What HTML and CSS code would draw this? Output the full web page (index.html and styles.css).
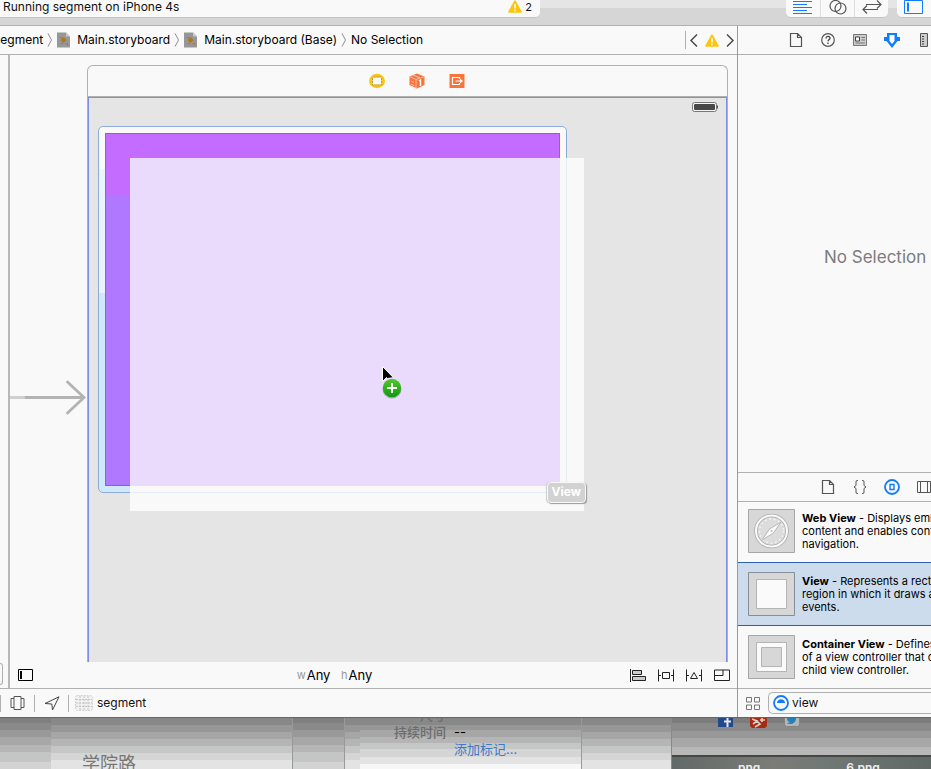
FILE: index.html
```html
<!DOCTYPE html>
<html lang="en">
<head>
<meta charset="utf-8">
<title>Main.storyboard</title>
<link rel="stylesheet" href="styles.css">
</head>
<body>
<svg class="defs" aria-hidden="true">
  <defs>
    <symbol id="chev" viewBox="0 0 6 14"><path d="M1 0.500L4.500 7L1 13.500" fill="none" stroke="#8f8f8f"/></symbol>
    <symbol id="board" viewBox="0 0 13 16"><path d="M0 0.500h9l4 4v11H0z" fill="#979797"/><path d="M9 .5v4h4z" fill="#c9c9c9"/><path d="M2.500 5.500h3M8.500 11.500h2v2M4 11.500h2" stroke="#a87d28" fill="none"/><path d="M6.500 5l3 3-3 3-3-3z" fill="#b07a10"/></symbol>
    <symbol id="warn" viewBox="0 0 14 13"><path d="M7 1.200L13 12H1z" fill="#fdc60c" stroke="#fdc60c" stroke-width="1.600" stroke-linejoin="round"/><path d="M7 4v4.500M7 9.800v1.500" stroke="#fff" stroke-width="1.500"/></symbol>
    <symbol id="file" viewBox="0 0 14 14"><path d="M1.500 .5h7l4 4v9h-11zM8.500 .5v4h4" fill="none" stroke="currentColor" stroke-width="1.200"/></symbol>
  </defs>
</svg>

<header class="toolbar">
  <div class="activity">
    <span>Running segment on iPhone 4s</span>
    <span class="issues"><svg width="14" height="13"><use href="#warn"/></svg>2</span>
  </div>
  <div class="segments">
    <button aria-label="Standard editor"><svg width="20" height="14" viewBox="0 0 20 14"><path d="M0 1.500h19M0 4.500h14M0 7.500h19M0 10.500h14M0 13.500h19" stroke="#127cff" fill="none"/></svg></button>
    <button aria-label="Assistant editor"><svg width="18" height="15" viewBox="0 0 18 15"><g fill="none" stroke="#555" stroke-width="1.200"><circle cx="6.500" cy="6" r="5.500"/><circle cx="11.500" cy="8.500" r="5.500"/></g></svg></button>
    <button aria-label="Version editor"><svg width="20" height="14" viewBox="0 0 20 14"><path d="M4 4.500h15M15 .5l4 4-4 4M16 9.500H1M5 5.500l-4 4 4 4" fill="none" stroke="#555" stroke-width="1.200"/></svg></button>
  </div>
  <div class="segments cut">
    <button aria-label="Toggle navigator"><svg width="20" height="14" viewBox="0 0 20 14"><path d="M.5 .5h18v13H.5z" fill="none" stroke="#127cff"/><path d="M3 2.500h2v9H3z" fill="#127cff"/></svg></button>
  </div>
</header>

<div class="workspace">
  <main class="editor">
    <nav class="jumpbar">
      <a href="#s">segment</a><svg width="6" height="14"><use href="#chev"/></svg>
      <a href="#m"><svg width="13" height="16"><use href="#board"/></svg>Main.storyboard</a><svg width="6" height="14"><use href="#chev"/></svg>
      <a href="#b"><svg width="13" height="16"><use href="#board"/></svg>Main.storyboard (Base)</a><svg width="6" height="14"><use href="#chev"/></svg>
      <a href="#n">No Selection</a>
      <div class="jump-issues">
        <button aria-label="Previous issue"><svg width="8" height="13" viewBox="0 0 8 13"><path d="M7 .5L1 6.500l6 6" fill="none" stroke="#444" stroke-width="1.400"/></svg></button>
        <svg width="14" height="13"><use href="#warn"/></svg>
        <button aria-label="Next issue"><svg width="8" height="13" viewBox="0 0 8 13"><path d="M1 .5l6 6-6 6" fill="none" stroke="#444" stroke-width="1.400"/></svg></button>
      </div>
    </nav>

    <div class="stage">
      <aside class="outline"><span class="outline-field"></span></aside>
      <section class="canvas-col">
        <div class="canvas">
          <svg class="entry" width="77" height="36" viewBox="0 0 77 36"><path d="M0 17.500h16" stroke="#d0d0d0" stroke-width="3"/><path d="M16 17.500h58M57.500 2L74 17.500 57.500 33" fill="none" stroke="#b3b3b3" stroke-width="2.800" stroke-linecap="round"/></svg>
          <div class="scene">
            <div class="dock">
              <svg width="16" height="16" viewBox="0 0 16 16"><ellipse cx="8" cy="8" rx="8" ry="7.200" fill="#fbc60e"/><path d="M3.500 4h9v8h-9z" fill="#fafafa" stroke="#c39a22"/><path d="M3.500 4h9v8h-9z" fill="none" stroke="#e6d391" stroke-dasharray="1 2"/></svg>
              <svg width="16" height="16" viewBox="0 0 16 16"><path d="M8 .5l7.500 3v8.500L8 15.500.5 12V3.500z" fill="#f9733c"/><path d="M.5 3.500L7 6.500l8.500-3M7 6.500v9M2 8l3 1.500M2 11l3 1.500M4 2l7 3" fill="none" stroke="#fdc4ab"/><path d="M10 8l1.500-1v6" fill="none" stroke="#fff" stroke-width="1.400"/></svg>
              <svg width="16" height="16" viewBox="0 0 16 16"><path d="M.5 1h15v14H.5z" fill="#f9733c"/><path d="M10.500 6V4.500h-7v7h7V10M6.500 8H12" fill="none" stroke="#fff" stroke-width="1.200"/><path d="M11 5.500L14 8l-3 2.500z" fill="#fff"/></svg>
            </div>
            <div class="device">
              <div class="status"><svg width="27" height="11" viewBox="0 0 27 11"><rect x=".5" y=".5" width="24" height="9" rx="2" fill="#f4f4f4" stroke="#777"/><rect x="2" y="2" width="21" height="6" rx="1" fill="#474947"/><path d="M25.500 3.500v3" stroke="#555"/></svg></div>
              <div class="drop"><div class="view"></div></div>
              <div class="ghost">
                <div class="ghost-view"></div>
                <span class="tag">View</span>
              </div>
              <svg class="cursor" width="22" height="36" viewBox="0 0 22 36">
                <defs><linearGradient id="g" x2="0" y2="1"><stop offset="0" stop-color="#55c92e"/><stop offset="1" stop-color="#0c9a0c"/></linearGradient></defs>
                <path d="M1.500 1.500v15l4-4 1 1 6-.8z" fill="#000" stroke="#fff"/>
                <circle cx="11" cy="24" r="9.500" fill="#8d7fa0" opacity=".6"/>
                <circle cx="11" cy="23" r="9.200" fill="url(#g)"/>
                <path d="M11 18v10M6 23h10" stroke="#fff" stroke-width="2"/>
              </svg>
            </div>
          </div>
        </div>
        <footer class="sizebar">
          <button aria-label="Toggle outline"><svg width="15" height="12" viewBox="0 0 15 12"><path d="M.5 .5h14v11H.5z" fill="none" stroke="#000"/><path d="M2 2h2v8H2z"/></svg></button>
          <button class="size"><small>w</small>Any <small>h</small>Any</button>
          <div class="constraints">
            <button aria-label="Align"><svg width="16" height="13" viewBox="0 0 16 13"><path d="M.5 0v13M2.500 1.500h9v4h-9zM2.500 7.500h13v4h-13z" fill="#ccc" stroke="#222"/></svg></button>
            <button aria-label="Pin"><svg width="16" height="13" viewBox="0 0 16 13"><path d="M.5 .5v12M15.500 .5v12M0 6.500h3M13 6.500h3M4.500 3.500h7v6h-7z" fill="none" stroke="#222"/></svg></button>
            <button aria-label="Resolve"><svg width="16" height="13" viewBox="0 0 16 13"><path d="M.5 .5v12M15.500 .5v12M0 6.500h3M13 6.500h3M8 3.500l3.500 6h-7z" fill="none" stroke="#222"/></svg></button>
            <button aria-label="Resizing"><svg width="16" height="13" viewBox="0 0 16 13"><path d="M.5 1h15v10.500H.5zM.5 6.500h8.500V1" fill="none" stroke="#222"/></svg></button>
          </div>
        </footer>
      </section>
    </div>

    <footer class="debugbar">
      <button aria-label="View hierarchy"><svg width="15" height="14" viewBox="0 0 15 14"><path d="M4 .5h7v13H4zM4 2.500H1v9h3M11 2.500h3v9h-3" fill="none" stroke="#555"/></svg></button>
      <button aria-label="Simulate location"><svg width="16" height="15" viewBox="0 0 16 15"><path d="M15 .8L8.500 14 7.800 8 1 7.500z" fill="none" stroke="#444"/></svg></button>
      <button class="target"><svg width="18" height="16" viewBox="0 0 18 16"><rect x=".5" y=".5" width="17" height="15" rx="2" fill="#f1f1f1" stroke="#d2d2d2" stroke-dasharray="2 1"/><path d="M1 4.500h16M1 8h16M1 11.500h16M5 1v14M9 1v14M13 1v14" stroke="#c4c4c4" stroke-dasharray="2 1"/></svg>segment</button>
    </footer>
  </main>

  <aside class="utilities">
    <div class="tabs">
      <button aria-label="File"><svg width="14" height="14"><use href="#file"/></svg></button>
      <button aria-label="Quick help"><svg width="14" height="14" viewBox="0 0 14 14"><circle cx="7" cy="7" r="6.300" fill="none" stroke="#555" stroke-width="1.200"/><path d="M5 5.500c0-3 4-2.500 4-.3C9 6.500 7 6.500 7 8.300M7 9.500V11" fill="none" stroke="#444" stroke-width="1.300"/></svg></button>
      <button aria-label="Identity"><svg width="14" height="12" viewBox="0 0 14 12"><path d="M.5 .5h13v11H.5z" fill="#ccc" stroke="#777"/><path d="M2.500 3h4v4h-4z" fill="#fff" stroke="#444"/><path d="M8.500 3.500h3.500M8.500 6h3.500M2.500 9h9.500" stroke="#777"/></svg></button>
      <button aria-label="Attributes"><svg width="16" height="15" viewBox="0 0 16 15"><path d="M3 0h10v4h3v4h-2.500L8 15 2.500 8H0V4h3z" fill="#127cff"/><path d="M5.500 2h5v6L8 11 5.500 8z" fill="#fff"/></svg></button>
      <button aria-label="Size"><svg width="14" height="14" viewBox="0 0 14 14"><path d="M3.500 .5h7v13h-7z" fill="#ccc" stroke="#555"/><path d="M5 3.500h2M5 6h2M5 8.500h2M5 11h2" stroke="#444"/></svg></button>
    </div>
    <div class="inspector">No Selection</div>
    <div class="tabs library-tabs">
      <button aria-label="File templates"><svg width="14" height="14"><use href="#file"/></svg></button>
      <button aria-label="Snippets"><svg width="14" height="14" viewBox="0 0 14 14"><path d="M5 .5H4Q3 .5 3 2v3.500L1 7l2 1.500V12q0 1.500 1 1.500h1M9 .5h1q1 0 1 1.500v3.500L13 7l-2 1.500V12q0 1.500-1 1.500H9" fill="none" stroke="#555"/></svg></button>
      <button aria-label="Objects"><svg width="16" height="16" viewBox="0 0 16 16"><circle cx="8" cy="8" r="7" fill="none" stroke="#127cff" stroke-width="1.800"/><path d="M6 5.500h4v5H6z" fill="none" stroke="#127cff" stroke-width="1.400"/></svg></button>
      <button aria-label="Media"><svg width="14" height="12" viewBox="0 0 14 12"><path d="M.5 .5h13v11H.5zM3.500 .5v11M10.500 .5v11" fill="none" stroke="#555"/></svg></button>
    </div>
    <ul class="library">
      <li>
        <svg width="47" height="44" viewBox="0 0 47 44"><path d="M.5 .5h46v43H.5z" fill="#d7d7d7" stroke="#a6a6a6"/><circle cx="23.500" cy="22" r="15.500" fill="#dcdcdc" stroke="#aaa" stroke-width="3.500"/><circle cx="23.500" cy="22" r="15.500" fill="none" stroke="#fafafa" stroke-width="2"/><circle cx="23.500" cy="22" r="12" fill="none" stroke="#f7f7f7" stroke-width="1.500" stroke-dasharray="1.500 3"/><path d="M33 13L25.500 24 14 31 21.500 20z" fill="#fafafa" stroke="#b8b8b8"/><circle cx="23.500" cy="22" r="1" fill="#bbb"/></svg>
        <p><b>Web View</b> - Displays embedded web<br>content and enables content<br>navigation.</p>
      </li>
      <li class="selected">
        <svg width="47" height="44" viewBox="0 0 47 44"><path d="M.5 .5h46v43H.5z" fill="#d7d7d7" stroke="#868e97"/><path d="M8.500 7.500h30v29h-30z" fill="#fafafa" stroke="#b4b4b4"/></svg>
        <p><b>View</b> - Represents a rectangular<br>region in which it draws and receives<br>events.</p>
      </li>
      <li class="last">
        <svg width="47" height="44" viewBox="0 0 47 44"><path d="M.5 .5h46v43H.5z" fill="#d7d7d7" stroke="#a6a6a6"/><path d="M8.500 7.500h30v29h-30z" fill="#fafafa" stroke="#b4b4b4"/><path d="M13.500 12.500h20v19h-20z" fill="#d7d7d7" stroke="#b4b4b4"/></svg>
        <p><b>Container View</b> - Defines a region<br>of a view controller that can include a<br>child view controller.</p>
      </li>
    </ul>
    <div class="filterbar">
      <button aria-label="Icon view"><svg width="14" height="13" viewBox="0 0 14 13"><path d="M.5 .5h5v4.500h-5zM8.500 .5h5v4.500h-5zM.5 8h5v4.500h-5zM8.500 8h5v4.500h-5z" fill="none" stroke="#777"/></svg></button>
      <label class="search"><svg width="16" height="16" viewBox="0 0 16 16"><circle cx="8" cy="8" r="7" fill="none" stroke="#127cff" stroke-width="1.800"/><path d="M4 8c0-5 8-5 8 0z" fill="#127cff"/></svg><input aria-label="Filter library" value="view"></label>
    </div>
  </aside>
</div>

<div class="desktop">
  <div class="pane shade"></div>
  <div class="pane map">学院路</div>
  <div class="pane shade side"></div>
  <div class="pane side"></div>
  <div class="pane info">
    <dl><dt>尺寸</dt><dd></dd><dt>持续时间</dt><dd>--</dd><dt></dt><dd><a href="#t">添加标记…</a></dd></dl>
  </div>
  <div class="pane side"></div>
  <div class="pane photos">
    <div class="social">
      <svg width="15" height="9" viewBox="0 0 15 9"><path d="M0 0h15v9H0z" fill="#23498a"/><path d="M9.500 9V0M6 3.500h7" stroke="#e4e8ef" stroke-width="2"/></svg>
      <svg width="17" height="10" viewBox="0 0 17 10"><path d="M0 0h17v8l-2 2H2L0 8z" fill="#a92a12"/><path d="M2 1l5 2-4 3M7 3l3 3-5 3M12 0v4M10 2h5" fill="none" stroke="#ded2cd" stroke-width="1.600"/></svg>
      <svg width="16" height="9" viewBox="0 0 16 9"><path d="M.5 0v7l2 1.500h11l2-1.500V0" fill="#b4b4b4" stroke="#858585"/><path d="M3 0h9c0 4-3 6-6 6-2 0-3-1-3-1 2 0 3-1 3-1-2 0-3-2-3-4z" fill="#267fba"/></svg>
    </div>
    <div class="files"><span>png</span><span>6.png</span></div>
  </div>
</div>
</body>
</html>
```
FILE: styles.css
```css
* { box-sizing: border-box; }
html, body { margin: 0; height: 100%; }
body {
  display: flex;
  flex-direction: column;
  overflow: hidden;
  background: #f9f9f9;
  color: #111;
  font: 12px/16px Inter, "Noto Sans CJK SC", sans-serif;
}
svg { display: block; flex: none; }
.defs { position: absolute; width: 0; height: 0; }
a { color: inherit; text-decoration: none; }
button {
  display: flex;
  align-items: center;
  justify-content: center;
  flex: none;
  padding: 0;
  border: 0;
  background: none;
  color: inherit;
  font: inherit;
}

.toolbar {
  display: flex;
  align-items: flex-start;
  flex: none;
  height: 26px;
  border-bottom: 1px solid #b0b0b0;
  background: linear-gradient(#e5e5e5 8px, #d6d6d6 8px);
}
.activity {
  display: flex;
  justify-content: space-between;
  width: 58%;
  height: 18px;
  padding: 0 8px 0 3px;
  line-height: 14px;
  background: #f9f9f9;
  border-bottom: 1px solid #c4c4c4;
  border-radius: 0 0 5px 0;
}
.issues { display: flex; gap: 3px; font-size: 11px; }
.segments {
  display: flex;
  margin-left: auto;
  height: 18px;
  background: #f9f9f9;
  border-bottom: 1px solid #c4c4c4;
  border-radius: 0 0 5px 5px;
}
.segments button { width: 34px; padding-bottom: 3px; }
.segments button + button { border-left: 1px solid #ddd; }
.segments.cut { margin-left: 9px; border-radius: 0 0 0 5px; }

.workspace { display: flex; flex: 1; min-height: 0; border-bottom: 1px solid #666; }
.editor { display: flex; flex-direction: column; flex: 1; min-width: 0; }

.jumpbar {
  display: flex;
  align-items: center;
  gap: 4px;
  flex: none;
  height: 29px;
  margin-left: -6px;
  border-bottom: 1px solid #b0b0b0;
  color: #000;
  white-space: nowrap;
}
.jumpbar a { display: flex; align-items: center; gap: 7px; }
.jump-issues {
  display: flex;
  align-items: center;
  gap: 7px;
  height: 18px;
  margin-left: auto;
  padding: 0 3px 0 4px;
  border-left: 1px solid #b0b0b0;
}

.stage { display: flex; flex: 1; min-height: 0; }
.outline {
  display: flex;
  align-items: flex-end;
  width: 10px;
  padding-bottom: 3px;
  border-right: 2px solid #b8b8b8;
}
.outline-field { width: 3px; height: 22px; border: 1px solid #b0b0b0; border-left: 0; border-radius: 0 4px 4px 0; }
.canvas-col { display: flex; flex-direction: column; flex: 1; min-width: 0; }
.canvas { display: flex; flex: 1; min-height: 0; padding: 10px 9px 0 0; overflow: hidden; }
.entry { margin-top: 315px; }
.scene {
  display: flex;
  flex-direction: column;
  flex: 1;
  border: 1px solid #b0b0b0;
  border-bottom: 0;
  border-radius: 6px 6px 0 0;
}
.dock {
  display: flex;
  align-items: center;
  justify-content: center;
  gap: 24px;
  height: 31px;
  padding-left: 19px;
  border-bottom: 1px solid #b0b0b0;
}
.device {
  position: relative;
  flex: 1;
  border: 1px solid #7b8fe6;
  border-bottom: 0;
  background: #e5e5e5;
}
.status { display: flex; justify-content: flex-end; height: 28px; padding: 4px 7px 0 0; }
.drop {
  width: 469px;
  height: 367px;
  margin-left: 9px;
  padding: 6px;
  border: 1px solid #8bacdb;
  border-radius: 5px;
  background: linear-gradient(#f9f9f9 42px, #e9f4fd 42px, #e9f4fd 166px, #cfe8fa 166px);
  background-size: 50% 100%;
  background-repeat: no-repeat;
  background-color: #f9f9f9;
}
.view {
  height: 353px;
  border: 1px solid #7766f0;
  background: linear-gradient(#c46cff 60px, #b077ff 62px);
  background-size: 24px 100%;
  background-repeat: no-repeat;
  background-color: #c46cff;
}
.ghost {
  position: absolute;
  left: 41px;
  top: 60px;
  width: 454px;
  height: 353px;
  background: #f9f9f9;
}
.ghost-view {
  width: 437px;
  height: 335px;
  border: solid #e3edf6;
  border-width: 0 1px 1px 0;
  background: linear-gradient(#eadbfc, #eadbfc) 0 0 / 430px 328px no-repeat #f9f9f9;
}
.tag {
  position: absolute;
  right: -2px;
  bottom: 8px;
  padding: 1px 4px 2px;
  border: 1px solid #f9f9f9;
  border-radius: 4px;
  background: #d2d2d2;
  box-shadow: 1px 1px 1px #999, -1px 0 1px #ccc;
  color: #fff;
  font-weight: 700;
}
.cursor { position: absolute; left: 292px; top: 267px; }

.sizebar {
  display: flex;
  align-items: center;
  justify-content: space-between;
  flex: none;
  height: 26px;
  padding: 0 7px 0 8px;
}
.size { gap: 1px; padding-left: 6px; color: #000; font-size: 13px; white-space: pre; }
.size small { font-size: 11px; color: #999; }
.size small + small { padding-left: 6px; }
.constraints { display: flex; gap: 12px; }

.debugbar {
  display: flex;
  align-items: center;
  flex: none;
  height: 29px;
  border-top: 1px solid #b0b0b0;
}
.debugbar button { height: 17px; width: 34px; border-left: 1px solid #b0b0b0; }
.debugbar .target { width: auto; gap: 4px; padding-left: 6px; }

.utilities {
  display: flex;
  flex-direction: column;
  width: 194px;
  border-left: 1px solid #999;
  overflow: hidden;
}
.tabs {
  display: flex;
  align-items: center;
  gap: 16px;
  flex: none;
  height: 29px;
  padding-left: 50px;
  border-bottom: 1px solid #b0b0b0;
  color: #555;
}
.tabs button { width: 16px; }
.library-tabs { height: 30px; padding-left: 82px; border-top: 1px solid #b0b0b0; }
.inspector {
  flex: 1;
  padding: 190px 0 0 86px;
  color: #7c7c7c;
  font-size: 17px;
  line-height: 24px;
  white-space: nowrap;
}
.library { margin: 0; padding: 0; list-style: none; color: #000; }
.library li { display: flex; gap: 7px; height: 60px; padding: 7px 10px; white-space: nowrap; }
.library .selected { height: 64px; padding-top: 9px; border: solid #2f5fb0; border-width: 1px 0; background: #cddcec; }
.library .last { height: 62px; padding-top: 9px; }
.library p { margin: 3px 0 0; font-size: 11px; line-height: 13px; }
.filterbar {
  display: flex;
  align-items: center;
  gap: 8px;
  flex: none;
  height: 29px;
  padding-left: 8px;
  border-top: 1px solid #b0b0b0;
}
.search {
  display: flex;
  align-items: center;
  gap: 3px;
  flex: 1;
  height: 22px;
  padding-left: 4px;
  border: 1px solid #b0b0b0;
  border-right: 0;
  border-radius: 5px 0 0 5px;
}
.search input { width: 100%; min-width: 0; padding: 0; border: 0; outline: 0; background: none; font: inherit; color: inherit; }

.desktop {
  display: grid;
  grid-template-columns: 51px 241px 52px 16px 221px 90px 1fr;
  grid-template-rows: 100%;
  flex: none;
  height: 51px;
}
.pane {
  overflow: hidden;
  background: linear-gradient(#888 7px, #979797 7px, #979797 14px, #a6a6a6 14px, #a6a6a6 21px, #b5b5b5 21px, #b5b5b5 28px, #c5c7c6 28px, #c5c7c6 35px, #d5d5d5 35px, #d5d5d5 42px, #e3e3e3 42px);
}
.shade { background: linear-gradient(#7f7f7f 5px, #8a8a8a 5px, #8a8a8a 12px, #999 12px, #999 19px, #a7a7a7 19px, #a7a7a7 27px, #b6b6b6 27px, #b6b6b6 34px, #c4c6c5 34px, #c4c6c5 44px, #d3d3d3 44px); }
.map { padding: 34px 0 0 31px; color: #777; font-size: 18px; line-height: 24px; }
.side { border-left: 1px solid #999; }
.info { background: linear-gradient(#888 7px, #979797 7px, #979797 12px, #a6a6a6 12px, #a6a6a6 19px, #b5b5b5 19px, #b5b5b5 25px, #c5c7c6 25px, #c5c7c6 31px, #d5d5d5 31px, #d5d5d5 39px, #e3e3e3 39px, #e3e3e3 46px, #f7f7f7 46px); }
.info dl {
  display: grid;
  grid-template-columns: 86px 1fr;
  grid-auto-rows: 17px;
  column-gap: 8px;
  margin: -11px 0 0;
  font-size: 13px;
  line-height: 16px;
}
.info dt { color: #6c6c6c; font-weight: 500; text-align: right; }
.info dd { margin: 0; color: #000; }
.info a { color: #3b7bc8; }
.photos { display: flex; flex-direction: column; background: linear-gradient(#7c7c7c 5px, #8a8a8a 5px, #8a8a8a 13px, #989898 13px, #989898 20px, #a7a7a7 20px, #a7a7a7 29px, #b8b8b8 29px); border-left: 1px solid #888; }
.social { display: flex; flex: none; gap: 17px; height: 37px; padding-left: 46px; }
.files {
  display: flex;
  gap: 86px;
  flex: none;
  padding: 4px 0 0 66px;
  border-top: 2px solid #454745;
  background: linear-gradient(90deg, #626968, #7b7c77 40%, #707775 60%, #606966);
  color: #eee;
  font-weight: 600;
  line-height: 14px;
}
```
